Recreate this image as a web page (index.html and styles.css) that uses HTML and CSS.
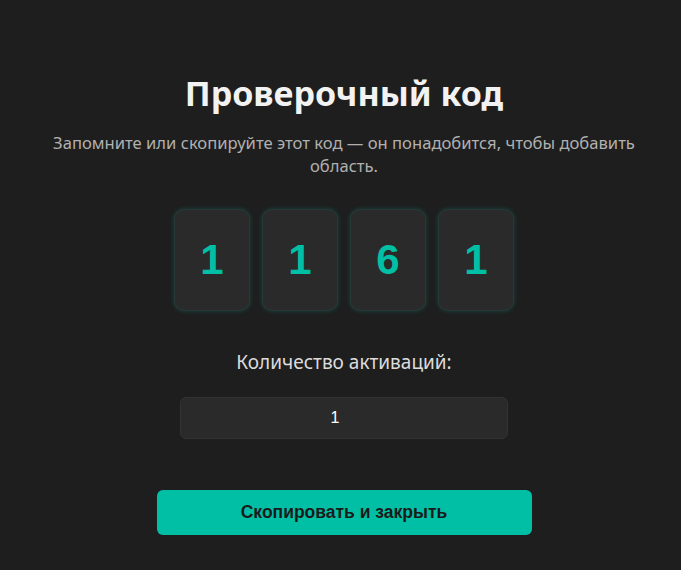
FILE: index.html
```html
<!DOCTYPE html>
<html lang="ru">
<head>
<meta charset="utf-8">
<link rel="stylesheet" href="styles.css">
</head>
<body>
<main class="dialog">
  <h1 class="title">Проверочный код</h1>
  <p class="subtitle">Запомните или скопируйте этот код — он понадобится, чтобы добавить область.</p>
  <div class="code">
    <div class="digit">1</div>
    <div class="digit">1</div>
    <div class="digit">6</div>
    <div class="digit">1</div>
  </div>
  <label class="label" for="count">Количество активаций:</label>
  <input class="count" id="count" type="text" value="1">
  <button class="btn">Скопировать и закрыть</button>
</main>
</body>
</html>
```

FILE: styles.css
```css
html, body {
  margin: 0;
  padding: 0;
  background: #1e1e1e;
  height: 100%;
}
body {
  font-family: "Noto Sans", "Open Sans", sans-serif;
  color: #eee;
}
.dialog {
  width: 600px;
  margin: 0 auto;
  padding-top: 72px;
  padding-left: 7px;
  display: flex;
  flex-direction: column;
  align-items: center;
}
.title {
  margin: 0;
  font-size: 34px;
  line-height: 42px;
  font-weight: 700;
  color: #f2f2f2;
}
.subtitle {
  margin: 17px 0 0;
  font-size: 16.6px;
  line-height: 23px;
  color: #b0b0b0;
  text-align: center;
}
.code {
  margin-top: 32px;
  display: flex;
  gap: 12px;
}
.digit {
  width: 76px;
  height: 102px;
  box-sizing: border-box;
  background: #2a2a2a;
  border: 1px solid rgba(0, 191, 165, 0.1);
  border-radius: 10px;
  box-shadow: 0 0 5px rgba(0, 191, 165, 0.25);
  display: flex;
  align-items: center;
  justify-content: center;
  font-family: "Liberation Sans", Arial, sans-serif;
  font-weight: 700;
  font-size: 42px;
  color: #00bfa5;
}
.label {
  margin-top: 39px;
  font-size: 19px;
  line-height: 24px;
  color: #dcdcdc;
}
.count {
  margin-top: 23px;
  width: 328px;
  height: 42px;
  box-sizing: border-box;
  padding: 0 18px 0 0;
  background: #2a2a2a;
  border: 1px solid #323232;
  border-radius: 6px;
  color: #fff;
  text-align: center;
  font-family: "Liberation Sans", Arial, sans-serif;
  font-size: 16px;
  outline: none;
}
.btn {
  margin-top: 51px;
  width: 375px;
  height: 45px;
  border: none;
  border-radius: 6px;
  background: #00bfa5;
  color: #1a1a1a;
  font-family: "Liberation Sans", Arial, sans-serif;
  font-weight: 700;
  font-size: 17.5px;
  cursor: pointer;
}
```
